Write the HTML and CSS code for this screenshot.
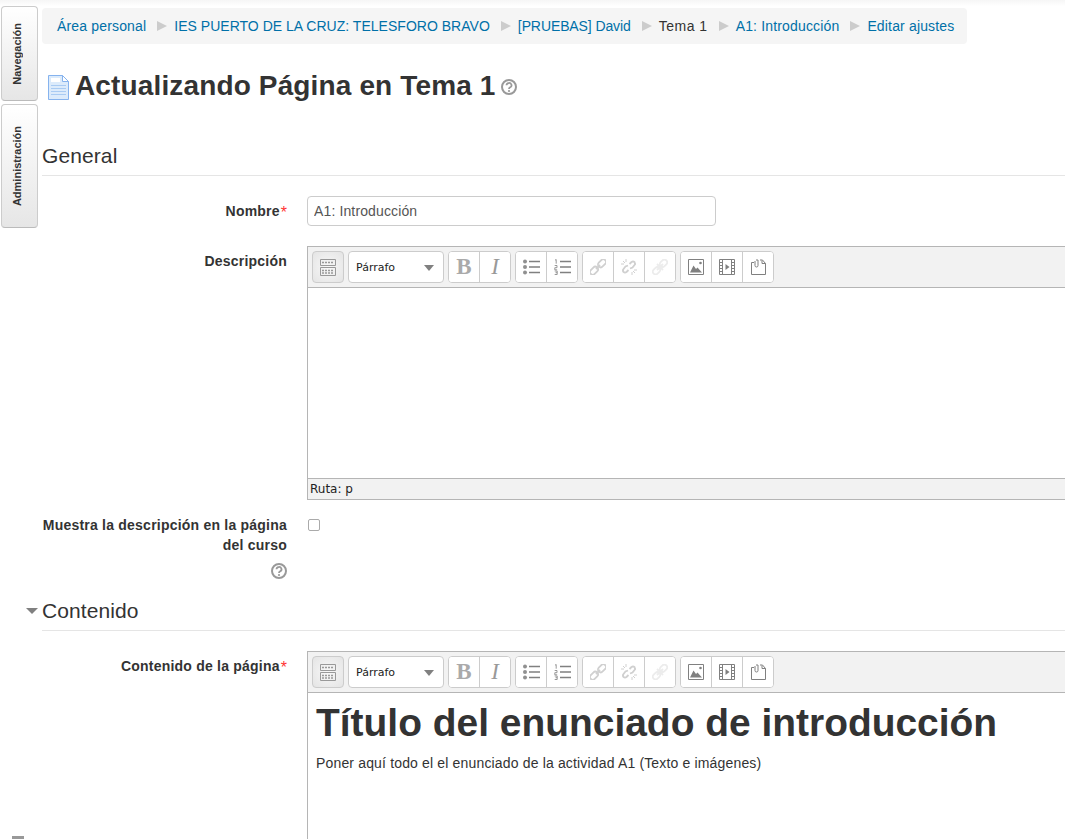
FILE: index.html
```html
<!DOCTYPE html>
<html lang="en">

<head>
    <meta charset="UTF-8">
    <title>Actualizando Página en Tema 1</title>
    <link rel="stylesheet" href="styles.css">
</head>

<body>
    <svg class="defs" width="0" height="0">
        <symbol id="i-kitchen" viewBox="0 0 16 17">
            <path d="M.5 .5h15v6H.5zM.5 8.500h15v8H.5z" fill="none" stroke="#999" />
            <path d="M2 3.500h12M2 11.500h12M2 14h12" stroke="#999" stroke-width="1.500" stroke-dasharray="2 1" fill="none" />
        </symbol>
        <symbol id="i-bullets" viewBox="0 0 17 16">
            <circle cx="2" cy="2.500" r="2" fill="#909090" />
            <circle cx="2" cy="8" r="2" fill="#909090" />
            <circle cx="2" cy="13.500" r="2" fill="#909090" />
            <path d="M6 2.500h11M6 8h11M6 13.500h11" stroke="#808080" stroke-width="1.600" />
        </symbol>
        <symbol id="i-numbers" viewBox="0 0 17 16">
            <path d="M1 1.200l1.200-.7v4.200M.7 6.500h2.300v2.200H.8v2.100h2.400M.7 12h2.500v3.500H.7M1.500 13.700h1.700" fill="none" stroke="#808080" stroke-width=".8" />
            <path d="M6 2.500h11M6 8h11M6 13.500h11" stroke="#808080" stroke-width="1.600" />
        </symbol>
        <symbol id="i-link" viewBox="0 0 16 16">
            <g fill="none" stroke="currentColor" stroke-width="1.800">
                <rect x="7.500" y="1.500" width="9" height="5.500" rx="2.700" transform="rotate(-45 12 4.250)" />
                <rect x="-.5" y="9" width="9" height="5.500" rx="2.700" transform="rotate(-45 4 11.750)" />
                <path d="M6 10l4-4" />
            </g>
        </symbol>
        <symbol id="i-unlink" viewBox="0 0 16 16">
            <g fill="none" stroke="currentColor" stroke-width="1.800">
                <path d="M8.500 5l2-2a2.600 2.600 0 0 1 3 0 2.600 2.600 0 0 1 0 3l-2 2.500-2.500 1" />
                <path d="M7.500 11l-2 2a2.600 2.600 0 0 1-3 0 2.600 2.600 0 0 1 0-3l2-2.500 2.500-1" />
            </g>
            <path d="M5 0v3M0 5h3M11 16v-3M16 11h-3M2 2l2 2M14 14l-2-2M1 11l2-.5M15 5l-2 .5" stroke="currentColor" fill="none" />
        </symbol>
        <symbol id="i-anchor" viewBox="0 0 16 16">
            <g fill="none" stroke="currentColor" stroke-width="1.800">
                <rect x="7.500" y="1.500" width="8" height="5.500" rx="2.700" transform="rotate(-45 11.500 4.250)" />
                <rect x=".5" y="9" width="8" height="5.500" rx="2.700" transform="rotate(-45 4.500 11.750)" />
                <path d="M5 5l6 6M11 5l-6 6" />
            </g>
        </symbol>
        <symbol id="i-image" viewBox="0 0 16 16">
            <path d="M.5 .5h15v15H.5z" fill="none" stroke="#808080" />
            <path d="M2 13.500l3.500-7 2.500 3.500 1.500-1.500 4.500 5z" fill="#808080" />
            <circle cx="12.500" cy="4" r="1.300" fill="#808080" />
        </symbol>
        <symbol id="i-media" viewBox="0 0 16 16">
            <path d="M.5 .5h15v15H.5zM3.500 .5v15M12.500 .5v15" fill="none" stroke="#808080" />
            <path d="M.5 3.500h3M.5 6.500h3M.5 9.500h3M.5 12.500h3M12.500 3.500h3M12.500 6.500h3M12.500 9.500h3M12.500 12.500h3" stroke="#808080" />
            <path d="M6.500 5l4 3-4 3z" fill="#808080" />
        </symbol>
        <symbol id="i-paste" viewBox="0 0 15 16">
            <path d="M3 3.500H.5v12h14V4.500l-3-3.500H9" fill="none" stroke="#808080" />
            <path d="M11 1.500v3h3.500" fill="none" stroke="#808080" />
            <path d="M4 2v4.500a1.500 1.500 0 0 0 3 0V1H5" fill="none" stroke="#808080" />
        </symbol>
        <symbol id="i-help" viewBox="0 0 16 16">
            <circle cx="8" cy="8" r="7" fill="none" stroke="#999" stroke-width="2" />
            <path d="M5.500 6.300a2.500 2.300 0 1 1 3.700 2c-.9.500-1.200.9-1.200 1.700" fill="none" stroke="#999" stroke-width="1.800" />
            <circle cx="8" cy="12" r="1.100" fill="#999" />
        </symbol>
    </svg>

    <div class="dock">
        <div class="dock-tab dock-nav"><span>Navegación</span></div>
        <div class="dock-tab dock-admin"><span>Administración</span></div>
    </div>

    <div class="page">
        <ul class="breadcrumb">
            <li><a href="#">Área personal</a></li>
            <li class="sep"></li>
            <li><a class="caps" href="#">IES PUERTO DE LA CRUZ: TELESFORO BRAVO</a></li>
            <li class="sep"></li>
            <li><a class="caps-tight" href="#">[PRUEBAS] David</a></li>
            <li class="sep"></li>
            <li class="current">Tema 1</li>
            <li class="sep"></li>
            <li><a href="#">A1: Introducción</a></li>
            <li class="sep"></li>
            <li><a href="#">Editar ajustes</a></li>
        </ul>

        <div class="title">
            <svg class="page-icon" width="21" height="25" viewBox="0 0 21 25">
                <path d="M.5 .5h14l6 6v18H.5z" fill="#dcebfb" stroke="#86b3ee" />
                <path d="M3 3h9v4H3z" fill="#fff" />
                <path d="M14.500 .5v6h6z" fill="#fff" stroke="#86b3ee" />
                <path d="M3 10.500h15M3 13.500h15M3 16.500h15M3 19.500h15" stroke="#a9cbf3" />
            </svg>
            <h2>Actualizando Página en Tema 1</h2>
            <svg class="help" width="16" height="16"><use href="#i-help" /></svg>
        </div>

        <form>
            <h3 class="legend legend-first">General</h3>

            <div class="row row-name">
                <label class="row-label">Nombre<span class="req">*</span></label>
                <div class="row-field"><input class="text" type="text" value="A1: Introducción"></div>
            </div>

            <div class="row">
                <label class="row-label">Descripción</label>
                <div class="row-field">
                    <div class="editor">
                        <div class="toolbar">
                            <button type="button" class="kitchen"><svg width="16" height="17"><use href="#i-kitchen" /></svg></button>
                            <div class="select">Párrafo<i class="caret"></i></div>
                            <div class="group">
                                <button type="button" class="glyph">B</button>
                                <button type="button" class="glyph glyph-i">I</button>
                            </div>
                            <div class="group">
                                <button type="button"><svg width="17" height="16"><use href="#i-bullets" /></svg></button>
                                <button type="button"><svg width="17" height="16"><use href="#i-numbers" /></svg></button>
                            </div>
                            <div class="group off">
                                <button type="button"><svg width="16" height="16"><use href="#i-link" /></svg></button>
                                <button type="button"><svg width="16" height="16"><use href="#i-unlink" /></svg></button>
                                <button type="button" class="fainter"><svg width="16" height="16"><use href="#i-anchor" /></svg></button>
                            </div>
                            <div class="group">
                                <button type="button"><svg width="16" height="16"><use href="#i-image" /></svg></button>
                                <button type="button"><svg width="16" height="16"><use href="#i-media" /></svg></button>
                                <button type="button"><svg width="15" height="16"><use href="#i-paste" /></svg></button>
                            </div>
                        </div>
                        <div class="editor-body editor-short"></div>
                        <div class="statusbar">Ruta: p</div>
                    </div>
                </div>
            </div>

            <div class="row row-check">
                <label class="row-label">Muestra la descripción en la página del curso
                    <svg class="help help-label" width="16" height="16"><use href="#i-help" /></svg>
                </label>
                <div class="row-field"><span class="checkbox"></span></div>
            </div>

            <h3 class="legend legend-open"><i class="caret caret-legend"></i>Contenido</h3>

            <div class="row">
                <label class="row-label">Contenido de la página<span class="req">*</span></label>
                <div class="row-field">
                    <div class="editor">
                        <div class="toolbar">
                            <button type="button" class="kitchen"><svg width="16" height="17"><use href="#i-kitchen" /></svg></button>
                            <div class="select">Párrafo<i class="caret"></i></div>
                            <div class="group">
                                <button type="button" class="glyph">B</button>
                                <button type="button" class="glyph glyph-i">I</button>
                            </div>
                            <div class="group">
                                <button type="button"><svg width="17" height="16"><use href="#i-bullets" /></svg></button>
                                <button type="button"><svg width="17" height="16"><use href="#i-numbers" /></svg></button>
                            </div>
                            <div class="group off">
                                <button type="button"><svg width="16" height="16"><use href="#i-link" /></svg></button>
                                <button type="button"><svg width="16" height="16"><use href="#i-unlink" /></svg></button>
                                <button type="button" class="fainter"><svg width="16" height="16"><use href="#i-anchor" /></svg></button>
                            </div>
                            <div class="group">
                                <button type="button"><svg width="16" height="16"><use href="#i-image" /></svg></button>
                                <button type="button"><svg width="16" height="16"><use href="#i-media" /></svg></button>
                                <button type="button"><svg width="15" height="16"><use href="#i-paste" /></svg></button>
                            </div>
                        </div>
                        <div class="editor-body">
                            <h1>Título del enunciado de introducción</h1>
                            <p>Poner aquí todo el el enunciado de la actividad A1 (Texto e imágenes)</p>
                        </div>
                    </div>
                </div>
            </div>
        </form>
    </div>

    <div class="corner"></div>
</body>

</html>
```

FILE: styles.css
```css
html,
body {
    margin: 0;
    padding: 0;
    height: 839px;
    overflow: hidden;
}

body {
    position: relative;
    font-family: "Liberation Sans", Arial, sans-serif;
    font-size: 14px;
    line-height: 20px;
    letter-spacing: .16px;
    color: #333;
    background: linear-gradient(#f6f6f6, #fff 6px);
}

.defs {
    position: absolute;
}

/* Side dock */
.dock {
    position: absolute;
    left: 1px;
    top: 6px;
    width: 37px;
    display: flex;
    flex-direction: column;
    gap: 3px;
}

.dock-tab {
    box-sizing: border-box;
    padding-right: 6px;
    border: 1px solid #ccc;
    border-bottom-color: #bbb;
    border-radius: 4px;
    background: linear-gradient(#fff, #e6e6e6);
    display: flex;
    align-items: center;
    justify-content: center;
    font-size: 11px;
    font-weight: bold;
    letter-spacing: 0;
}

.dock-tab span {
    writing-mode: vertical-rl;
    transform: rotate(180deg);
}

.dock-nav {
    height: 95px;
}

.dock-admin {
    height: 124px;
}

/* Main column */
.page {
    margin-left: 42px;
    padding-top: 8px;
}

.breadcrumb {
    box-sizing: border-box;
    width: 925px;
    height: 36px;
    margin: 0;
    padding: 0 15px;
    list-style: none;
    display: flex;
    align-items: center;
    white-space: nowrap;
    background: #f5f5f5;
    border-radius: 4px;
}

.breadcrumb a {
    color: #0070a8;
    text-decoration: none;
}

.breadcrumb .caps {
    letter-spacing: .02px;
}

.breadcrumb .caps-tight {
    letter-spacing: -.1px;
}

.current {
    letter-spacing: .5px;
}

.sep {
    width: 0;
    height: 0;
    margin: 0 7px 0 11px;
    border-left: 10px solid #ccc;
    border-top: 5px solid transparent;
    border-bottom: 5px solid transparent;
}

.title {
    display: flex;
    align-items: center;
    height: 40px;
    margin-top: 22px;
}

.page-icon {
    margin-left: 6px;
    margin-top: 3px;
}

.title h2 {
    margin: 0 5px 0 6px;
    font-size: 28px;
    line-height: 40px;
    letter-spacing: .14px;
}

.help {
    display: block;
}

.title .help {
    margin-top: 2px;
}

.legend {
    margin: 0;
    height: 35px;
    box-sizing: border-box;
    line-height: 30px;
    font-size: 21px;
    font-weight: normal;
    letter-spacing: .1px;
    border-bottom: 1px solid #e5e5e5;
    position: relative;
}

.legend-first {
    margin-top: 35px;
}

.legend-open {
    margin-top: 10px;
    line-height: 29px;
}

.caret {
    display: inline-block;
    width: 0;
    height: 0;
    border-top: 6px solid #808080;
    border-left: 5px solid transparent;
    border-right: 5px solid transparent;
}

.caret-legend {
    position: absolute;
    left: -16px;
    top: 12px;
    border-left-width: 6px;
    border-right-width: 6px;
}

/* Form rows */
.row {
    display: flex;
    margin-top: 20px;
}

.row-label {
    flex: none;
    box-sizing: border-box;
    width: 245px;
    padding-top: 5px;
    text-align: right;
    font-weight: bold;
    letter-spacing: .22px;
}

.req {
    margin-left: 1px;
    color: #f33;
    font-size: 16px;
    line-height: 0;
    vertical-align: -2px;
    font-weight: normal;
    letter-spacing: 0;
}

.row-field {
    flex: 1;
    min-width: 0;
    margin-left: 20px;
}

.text {
    box-sizing: border-box;
    display: block;
    width: 409px;
    height: 30px;
    padding: 0 6px;
    border: 1px solid #ccc;
    border-radius: 4px;
    font: 14px "Liberation Sans", Arial, sans-serif;
    letter-spacing: .13px;
    color: #555;
}

.row-check {
    margin-top: 10px;
    height: 76px;
}

.help-label {
    display: block;
    margin: 8px 0 0 auto;
}

.checkbox {
    display: block;
    box-sizing: border-box;
    width: 12px;
    height: 12px;
    margin: 9px 0 0 1px;
    border: 1px solid #aaa;
    border-radius: 2px;
}

/* Editor */
.editor {
    border: 1px solid #b5b5b5;
    border-right: 0;
}

.toolbar {
    box-sizing: border-box;
    height: 41px;
    display: flex;
    gap: 4px;
    padding: 4px;
    background: #f2f2f2;
    border-bottom: 1px solid #b5b5b5;
}

.toolbar button {
    width: 31px;
    height: 30px;
    padding: 0;
    border: 0;
    border-left: 1px solid #ccc;
    background: #fff;
    display: flex;
    align-items: center;
    justify-content: center;
    color: #d0d0d0;
}

.group {
    display: flex;
    border: 1px solid #ccc;
    border-radius: 4px;
    overflow: hidden;
    background: #fff;
}

.group button:first-child {
    border-left: 0;
    width: 30px;
}

.toolbar .kitchen {
    width: 32px;
    height: 32px;
    box-sizing: border-box;
    border: 1px solid #ccc;
    border-radius: 4px;
    background: radial-gradient(#f8f8f8, #e4e4e4);
}

.select {
    box-sizing: border-box;
    width: 96px;
    height: 32px;
    padding: 1px 9px 0 7px;
    border: 1px solid #ccc;
    border-radius: 4px;
    background: #fff;
    display: flex;
    align-items: center;
    justify-content: space-between;
    font: 11px "DejaVu Sans", Verdana, sans-serif;
    letter-spacing: 0;
    color: #222;
}

.toolbar .glyph {
    font: bold 23px "Liberation Serif", "Times New Roman", serif;
    color: #aaa;
}

.toolbar .glyph-i {
    font-weight: normal;
    font-style: italic;
    color: #999;
}

.off .fainter {
    color: #ececec;
}

.editor-body {
    box-sizing: border-box;
    padding: 8px;
    height: 170px;
    background: #fff;
}

.editor-short {
    height: 190px;
}

.editor-body h1 {
    margin: 0;
    font-size: 38.93px;
    line-height: 44px;
    letter-spacing: 0;
}

.editor-body p {
    margin: 8px 0 0;
}

.statusbar {
    box-sizing: border-box;
    height: 21px;
    padding: 1px 2px;
    background: #f2f2f2;
    border-top: 1px solid #b5b5b5;
    font: 12px/19px "DejaVu Sans", Verdana, sans-serif;
    letter-spacing: 0;
    color: #222;
}

.corner {
    position: absolute;
    left: 12px;
    bottom: 0;
    width: 12px;
    height: 3px;
    background: #999;
}
```
